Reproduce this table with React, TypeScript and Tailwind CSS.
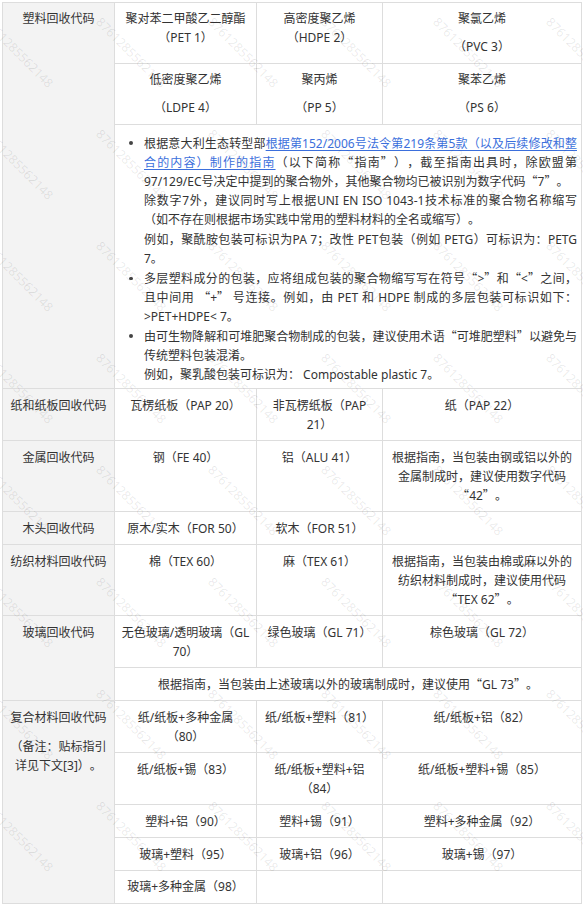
import React from "react";

const Q = ({ children }: { children: React.ReactNode }) => (
  <>
    <span className="font-['Noto_Sans_CJK_SC'] leading-[0]">“</span>
    {children}
    <span className="font-['Noto_Sans_CJK_SC'] leading-[0]">”</span>
  </>
);

const C = ({
  children,
  colSpan,
  rowSpan,
}: {
  children?: React.ReactNode;
  colSpan?: number;
  rowSpan?: number;
}) => (
  <td
    colSpan={colSpan}
    rowSpan={rowSpan}
    className="border border-[#dddddd] align-top text-center pt-[6.6px] pb-[6px] px-[6px] whitespace-nowrap"
  >
    {children}
  </td>
);

const H = ({
  children,
  rowSpan,
}: {
  children?: React.ReactNode;
  rowSpan?: number;
}) => (
  <td
    rowSpan={rowSpan}
    className="border border-[#dddddd] align-top text-center pt-[6.6px] pb-[6px] px-[6px] whitespace-nowrap bg-[#f3f3f3]"
  >
    {children}
  </td>
);

const P2 = ({ a, b }: { a: React.ReactNode; b: React.ReactNode }) => (
  <>
    <div>{a}</div>
    <div className="mt-[9px]">{b}</div>
  </>
);

const J = ({ children }: { children: React.ReactNode }) => (
  <div className="text-justify [text-align-last:justify]">{children}</div>
);
const N = ({ children }: { children: React.ReactNode }) => (
  <div className="text-left">{children}</div>
);

const Bullet = ({ children, className }: { children: React.ReactNode; className?: string }) => (
  <div className={`flex ${className ?? ""}`}>
    <div className="w-[15px] shrink-0 h-[19.2px] flex items-center">
      <span className="block w-[3.5px] h-[3.5px] rounded-full bg-[#444444]" />
    </div>
    <div className="flex-1 min-w-0">{children}</div>
  </div>
);

const Link = ({ children }: { children: React.ReactNode }) => (
  <span className="text-[#3b6fdc] underline underline-offset-2">{children}</span>
);

export default function App() {
  const marks: { x: number; y: number }[] = [];
  for (let j = 0; j < 9; j++) {
    for (let i = 0; i < 6; i++) {
      marks.push({ x: -15 + 112.5 * i, y: 20 + 112 * j });
    }
  }

  return (
    <div className="relative w-[583px] h-[905px] overflow-hidden bg-white pt-[1.5px] pl-[2px] font-['Noto_Sans','Noto_Sans_CJK_SC',sans-serif] text-[12px] leading-[19.2px] text-[#333333] [text-spacing-trim:space-all]">
      <table className="table-fixed border-collapse w-[579px]">
        <colgroup>
          <col className="w-[112px]" />
          <col className="w-[142px]" />
          <col className="w-[126px]" />
          <col className="w-[199px]" />
        </colgroup>
        <tbody>
          <tr>
            <H rowSpan={3}>塑料回收代码</H>
            <C>
              聚对苯二甲酸乙二醇酯
              <br />
              （PET 1）
            </C>
            <C>
              高密度聚乙烯
              <br />
              （HDPE 2）
            </C>
            <C>
              <P2 a="聚氯乙烯" b="（PVC 3）" />
            </C>
          </tr>
          <tr>
            <C>
              <P2 a="低密度聚乙烯" b="（LDPE 4）" />
            </C>
            <C>
              <P2 a="聚丙烯" b="（PP 5）" />
            </C>
            <C>
              <P2 a="聚苯乙烯" b="（PS 6）" />
            </C>
          </tr>
          <tr>
            <td
              colSpan={3}
              className="border border-[#dddddd] align-top pt-[9px] pb-[4px] pl-[14px] pr-[4px]"
            >
              <Bullet>
                <J>
                  根据意大利生态转型部
                  <Link>根据第152/2006号法令第219条第5款（以及后续修改和整</Link>
                </J>
                <J>
                  <Link>合的内容）制作的指南</Link>（以下简称<Q>指南</Q>），截至指南出具时，除欧盟第
                </J>
                <N>
                  97/129/EC号决定中提到的聚合物外，其他聚合物均已被识别为数字代码<Q>7</Q>。
                </N>
                <J>除数字7外，建议同时写上根据UNI EN ISO 1043-1技术标准的聚合物名称缩写</J>
                <N>（如不存在则根据市场实践中常用的塑料材料的全名或缩写）。</N>
                <J>例如，聚酰胺包装可标识为PA 7；改性 PET包装（例如 PETG）可标识为：PETG</J>
                <N>7。</N>
              </Bullet>
              <Bullet className="mt-[1px]">
                <J>
                  多层塑料成分的包装，应将组成包装的聚合物缩写写在符号<Q>&gt;</Q>和<Q>&lt;</Q>之间，
                </J>
                <J>
                  且中间用 <Q>+</Q> 号连接。例如，由 PET 和 HDPE 制成的多层包装可标识如下：
                </J>
                <N>&gt;PET+HDPE&lt; 7。</N>
              </Bullet>
              <Bullet>
                <J>
                  由可生物降解和可堆肥聚合物制成的包装，建议使用术语<Q>可堆肥塑料</Q>以避免与
                </J>
                <N>传统塑料包装混淆。</N>
                <N>例如，聚乳酸包装可标识为： Compostable plastic 7。</N>
              </Bullet>
            </td>
          </tr>
          <tr>
            <H>纸和纸板回收代码</H>
            <C>瓦楞纸板（PAP 20）</C>
            <C>
              非瓦楞纸板（PAP
              <br />
              21）
            </C>
            <C>纸（PAP 22）</C>
          </tr>
          <tr>
            <H>金属回收代码</H>
            <C>钢（FE 40）</C>
            <C>铝（ALU 41）</C>
            <C>
              根据指南，当包装由钢或铝以外的
              <br />
              金属制成时，建议使用数字代码
              <br />
              <Q>42</Q>。
            </C>
          </tr>
          <tr>
            <H>木头回收代码</H>
            <C>原木/实木（FOR 50）</C>
            <C>软木（FOR 51）</C>
            <C />
          </tr>
          <tr>
            <H>纺织材料回收代码</H>
            <C>棉（TEX 60）</C>
            <C>麻（TEX 61）</C>
            <C>
              根据指南，当包装由棉或麻以外的
              <br />
              纺织材料制成时，建议使用代码
              <br />
              <Q>TEX 62</Q>。
            </C>
          </tr>
          <tr>
            <H rowSpan={2}>玻璃回收代码</H>
            <C>
              无色玻璃/透明玻璃（GL
              <br />
              70）
            </C>
            <C>绿色玻璃（GL 71）</C>
            <C>棕色玻璃（GL 72）</C>
          </tr>
          <tr>
            <C colSpan={3}>
              根据指南，当包装由上述玻璃以外的玻璃制成时，建议使用<Q>GL 73</Q>。
            </C>
          </tr>
          <tr>
            <H rowSpan={5}>
              <div>复合材料回收代码</div>
              <div className="mt-[10px]">
                （备注：贴标指引
                <br />
                详见下文[3]）。
              </div>
            </H>
            <C>
              纸/纸板+多种金属
              <br />
              （80）
            </C>
            <C>纸/纸板+塑料（81）</C>
            <C>纸/纸板+铝（82）</C>
          </tr>
          <tr>
            <C>纸/纸板+锡（83）</C>
            <C>
              纸/纸板+塑料+铝
              <br />
              （84）
            </C>
            <C>纸/纸板+塑料+锡（85）</C>
          </tr>
          <tr>
            <C>塑料+铝（90）</C>
            <C>塑料+锡（91）</C>
            <C>塑料+多种金属（92）</C>
          </tr>
          <tr>
            <C>玻璃+塑料（95）</C>
            <C>玻璃+铝（96）</C>
            <C>玻璃+锡（97）</C>
          </tr>
          <tr>
            <C>玻璃+多种金属（98）</C>
            <C />
            <C />
          </tr>
        </tbody>
      </table>
      <div className="pointer-events-none absolute inset-0">
        {marks.map((m, k) => (
          <span
            key={k}
            className="absolute block whitespace-nowrap text-[12.5px] leading-[12px] text-black/[0.09] font-['Noto_Sans',sans-serif] origin-left rotate-45"
            style={{ left: m.x, top: m.y - 6 }}
          >
            8761285562148
          </span>
        ))}
      </div>
    </div>
  );
}
